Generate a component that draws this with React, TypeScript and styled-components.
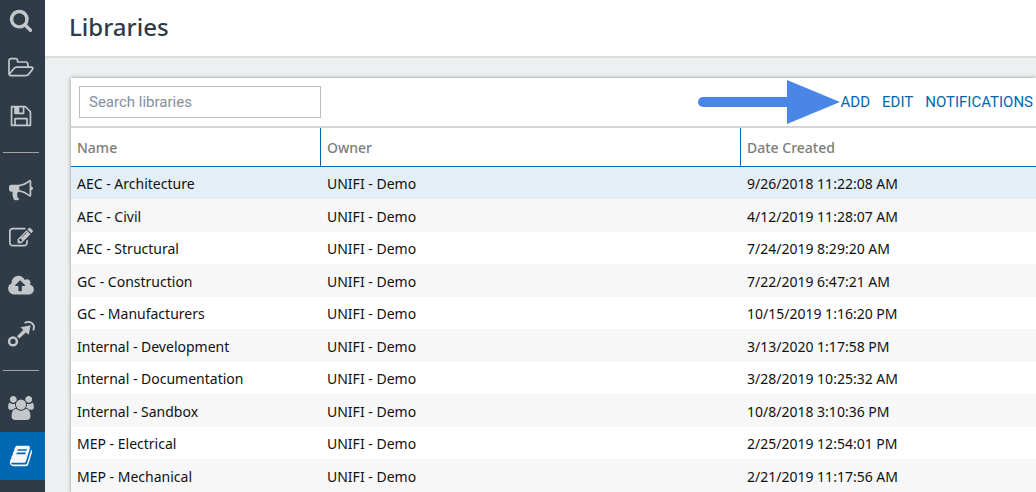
import React from "react";
import styled, { createGlobalStyle, css } from "styled-components";

const GlobalStyle = createGlobalStyle`
  *, *::before, *::after { box-sizing: border-box; }
  body {
    margin: 0;
    background: #ecf0f1;
    font-family: "Noto Sans", "Open Sans", sans-serif;
    overflow: hidden;
  }
`;

const Page = styled.div`
  display: flex;
  height: 100vh;
  overflow: hidden;
`;

const Sidebar = styled.nav`
  flex: 0 0 45px;
  background: #2f3c48;
  overflow: hidden;
`;

const NavList = styled.ul`
  list-style: none;
  margin: -4px 0 0;
  padding: 0;
`;

const NavLink = styled.a<{ $active?: boolean }>`
  display: flex;
  align-items: center;
  justify-content: center;
  height: 48px;
  padding-right: 3px;
  color: #c3c7ca;
  ${(p) =>
    p.$active &&
    css`
      background: #0067b3;
      color: #f4f6f8;
    `}
`;

const Separator = styled.li`
  height: 1px;
  margin: 12px 6px 13px 3px;
  background: #a3a3a1;
`;

const Icon = styled.svg`
  display: block;
  width: 24px;
  height: 24px;
  fill: currentColor;
  overflow: visible;
`;

const Main = styled.main`
  flex: 1;
  min-width: 0;
  display: flex;
  flex-direction: column;
`;

const Header = styled.header`
  flex: none;
  padding: 0 24px 2px;
  background: #ffffff;
  border-bottom: 2px solid #dcdcdc;
`;

const Title = styled.h1`
  margin: 0;
  font-size: 24px;
  line-height: 54px;
  font-weight: 500;
  color: #2f3c48;
`;

const Content = styled.div`
  flex: 1;
  min-height: 0;
  padding: 20px 0 0 26px;
  overflow: hidden;
`;

const Panel = styled.section`
  background: #ffffff;
  box-shadow: 0 0 4px rgba(0, 0, 0, 0.4);
`;

const Toolbar = styled.div`
  display: flex;
  align-items: center;
  height: 50px;
  padding: 0 3px 0 8px;
  border-bottom: 2px solid #d4d4d4;
`;

const SearchInput = styled.input`
  width: 242px;
  height: 32px;
  padding: 0 9px;
  border: 1px solid #b5bcc3;
  border-radius: 0;
  background: #ffffff;
  font-family: Roboto, sans-serif;
  font-size: 15px;
  color: #2f3c48;
  &::placeholder {
    color: #84909c;
    opacity: 1;
  }
`;

const Actions = styled.div`
  display: flex;
  align-items: center;
  gap: 12px;
`;

const ActionButton = styled.button`
  padding: 0;
  border: 0;
  background: none;
  font-family: Roboto, sans-serif;
  font-size: 15px;
  line-height: 20px;
  color: #0067b3;
  cursor: pointer;
`;

const Arrow = styled.svg`
  display: block;
  width: 143px;
  height: 44px;
  margin-left: auto;
  fill: #4a86e8;
`;

const Table = styled.table`
  width: 100%;
  table-layout: fixed;
  border-collapse: separate;
  border-spacing: 0;
  text-align: left;
`;

const Col = styled.col<{ $width?: number }>`
  width: ${(p) => (p.$width ? `${p.$width}px` : "auto")};
`;

const HeadCell = styled.th`
  height: 39px;
  padding: 2px 6px 0;
  border-bottom: 1px solid #0067b3;
  font-size: 14px;
  line-height: 20px;
  font-weight: 500;
  color: #7c7c7c;
  &:not(:last-child) {
    border-right: 1px solid #0067b3;
  }
`;

const Cell = styled.td`
  padding: 2px 6px 0;
  font-size: 14px;
  line-height: 20px;
  color: #111111;
  white-space: nowrap;
`;

const Row = styled.tr<{ $selected?: boolean }>`
  height: 32px;
  background: #f7f7f7;
  &:nth-child(odd) {
    background: #ffffff;
  }
  &:nth-child(even) {
    height: 33px;
  }
  ${(p) =>
    p.$selected &&
    css`
      &&:nth-child(odd) {
        background: #e4eef7;
      }
    `}
`;

type NavItem = { label: string; icon: React.ReactNode; viewBox?: string; active?: boolean };

const navGroups: NavItem[][] = [
  [
    {
      label: "Search",
      icon: (
        <path d="M1216 832q0-185-131.5-316.5t-316.5-131.5-316.5 131.5-131.5 316.5 131.5 316.5 316.5 131.5 316.5-131.5 131.5-316.5zm512 832q0 52-38 90t-90 38q-54 0-90-38l-343-342q-179 124-399 124-143 0-273.5-55.5t-225-150-150-225-55.5-273.5 55.5-273.5 150-225 225-150 273.5-55.5 273.5 55.5 225 150 150 225 55.5 273.5q0 220-124 399l343 343q37 37 37 90z" />
      ),
    },
    {
      label: "Open",
      icon: (
        <path d="M1717 931q0-35-53-35h-1088q-40 0-85.5 21.5t-71.5 52.5l-294 363q-18 24-18 40 0 35 53 35h1088q40 0 86-22t71-53l294-363q18-22 18-39zm-1141-163h768v-160q0-40-28-68t-68-28h-576q-40 0-68-28t-28-68v-64q0-40-28-68t-68-28h-320q-40 0-68 28t-28 68v853l256-315q44-53 116-87.5t140-34.5zm1269 163q0 62-46 120l-295 363q-43 53-116 87.5t-140 34.5h-1088q-92 0-158-66t-66-158v-960q0-92 66-158t158-66h320q92 0 158 66t66 158v32h544q92 0 158 66t66 158v160h192q54 0 99 24.5t67 70.5q15 32 15 68z" />
      ),
    },
    {
      label: "Save",
      icon: (
        <path d="M512 1536h768v-384h-768v384zm896 0h128v-896q0-14-10-38.5t-20-34.5l-281-281q-10-10-34-20t-39-10v416q0 40-28 68t-68 28h-576q-40 0-68-28t-28-68v-416h-128v1280h128v-416q0-40 28-68t68-28h832q40 0 68 28t28 68v416zm-384-928v-320q0-13-9.5-22.5t-22.5-9.5h-192q-13 0-22.5 9.5t-9.5 22.5v320q0 13 9.5 22.5t22.5 9.5h192q13 0 22.5-9.5t9.5-22.5zm640 32v928q0 40-28 68t-68 28h-1344q-40 0-68-28t-28-68v-1344q0-40 28-68t68-28h928q40 0 88 20t76 48l280 280q28 28 48 76t20 88z" />
      ),
    },
  ],
  [
    {
      label: "Announcements",
      icon: (
        <path d="M1664 640q53 0 90.5 37.5t37.5 90.5-37.5 90.5-90.5 37.5v384q0 52-38 90t-90 38q-417-347-812-380-58 19-91 66t-31 100.5 40 92.5q-20 33-23 65.5t6 58 33.5 55 48 50 61.5 50.5q-29 58-111.5 83t-168.5 11.5-132-55.5q-7-23-29.5-87.5t-32-94.5-23-89-15-101 3.5-98.5 22-110.5h-122q-66 0-113-47t-47-113v-192q0-66 47-113t113-47h480q435 0 896-384 52 0 90 38t38 90v384zm-128 604v-954q-394 302-768 343v270q377 42 768 341z" />
      ),
    },
    {
      label: "Edit",
      icon: (
        <path d="M888 1184l116-116-152-152-116 116v56h96v96h56zm440-720q-16-16-33 1l-350 350q-17 17-1 33t33-1l350-350q17-17 1-33zm80 594v190q0 119-84.5 203.5t-203.5 84.5h-832q-119 0-203.5-84.5t-84.5-203.5v-832q0-119 84.5-203.5t203.5-84.5h832q63 0 117 25 15 7 18 23 3 17-9 29l-49 49q-14 14-32 8-23-6-45-6h-832q-66 0-113 47t-47 113v832q0 66 47 113t113 47h832q66 0 113-47t47-113v-126q0-13 9-22l64-64q15-15 35-7t20 29zm-96-738l288 288-672 672h-288v-288zm444 132l-92 92-288-288 92-92q28-28 68-28t68 28l152 152q28 28 28 68t-28 68z" />
      ),
    },
    {
      label: "Upload",
      icon: (
        <path d="M1216 864q0-14-9-23l-352-352q-9-9-23-9t-23 9l-351 351q-10 12-10 24 0 14 9 23t23 9h224v352q0 13 9.5 22.5t22.5 9.5h192q13 0 22.5-9.5t9.5-22.5v-352h224q13 0 22.5-9.5t9.5-22.5zm640 288q0 159-112.5 271.5t-271.5 112.5h-1088q-185 0-316.5-131.5t-131.5-316.5q0-130 70-240t188-165q-2-30-2-43 0-212 150-362t362-150q156 0 285.5 87t188.5 231q71-62 166-62 106 0 181 75t75 181q0 76-41 138 130 31 213.5 135.5t83.5 238.5z" />
      ),
    },
    {
      label: "Connections",
      viewBox: "0 0 24 24",
      icon: (
        <>
          <circle cx="4" cy="19.4" r="3.9" fill="none" stroke="currentColor" strokeWidth="2.5" />
          <path d="M8 14.2 14.2 8 11.6 5.2 21.6 3.2 19.8 12.8 16.8 10.4 10.4 16.6z" />
          <path
            d="M15.6 1.1C20-1.8 27.2 1.4 24.2 8.4"
            fill="none"
            stroke="currentColor"
            strokeWidth="1.8"
          />
        </>
      ),
    },
  ],
  [
    {
      label: "Users",
      icon: (
        <path d="M529 896q-162 5-265 128h-134q-82 0-138-40.5t-56-118.5q0-353 124-353 6 0 43.5 21t97.5 42.5 119 21.5q67 0 133-23-5 37-5 66 0 139 81 256zm1071 637q0 120-73 189.5t-194 69.5h-874q-121 0-194-69.5t-73-189.5q0-53 3.5-103.5t14-109 26.5-108.5 43-97.5 62-81 85.5-53.5 111.5-20q10 0 43 21.5t73 48 107 48 135 21.5 135-21.5 107-48 73-48 43-21.5q61 0 111.5 20t85.5 53.5 62 81 43 97.5 26.5 108.5 14 109 3.5 103.5zm-1024-1277q0 106-75 181t-181 75-181-75-75-181 75-181 181-75 181 75 75 181zm704 384q0 159-112.5 271.5t-271.5 112.5-271.5-112.5-112.5-271.5 112.5-271.5 271.5-112.5 271.5 112.5 112.5 271.5zm576 225q0 78-56 118.5t-138 40.5h-134q-103-123-265-128 81-117 81-256 0-29-5-66 66 23 133 23 59 0 119-21.5t97.5-42.5 43.5-21q124 0 124 353zm-128-609q0 106-75 181t-181 75-181-75-75-181 75-181 181-75 181 75 75 181z" />
      ),
    },
    {
      label: "Libraries",
      active: true,
      icon: (
        <path d="M1703 478q40 57 18 129l-275 906q-19 64-76.5 107.5t-122.5 43.5h-923q-77 0-148.5-53.5t-99.5-131.5q-24-67-2-127 0-4 3-27t4-37q1-8-3-21.5t-3-19.5q2-11 8-21t16.5-23.5 16.5-23.5q23-38 45-91.5t30-91.5q3-10 .5-30t-.5-28q3-11 17-28t17-23q21-36 42-92t25-90q1-9-2.5-32t.5-28q4-13 22-30.5t22-22.5q19-26 42.5-84.5t27.5-96.5q1-8-3-25.5t-2-26.5q2-8 9-18t18-23 17-21q8-12 16.5-30.5t15-35 16-36 19.5-32 26.5-23.5 36-11.5 47.5 5.5l-1 3q38-9 51-9h761q74 0 114 56t18 130l-274 906q-36 119-71.5 153.5t-128.5 34.5h-869q-27 0-38 15-11 16-1 43 24 70 144 70h923q29 0 56-15.5t35-41.5l300-987q7-22 5-57 38 15 59 43zm-1064 2q-4 13 2 22.5t20 9.5h608q13 0 25.5-9.5t16.5-22.5l21-64q4-13-2-22.5t-20-9.5h-608q-13 0-25.5 9.5t-16.5 22.5zm-83 256q-4 13 2 22.5t20 9.5h608q13 0 25.5-9.5t16.5-22.5l21-64q4-13-2-22.5t-20-9.5h-608q-13 0-25.5 9.5t-16.5 22.5z" />
      ),
    },
  ],
];

const libraries = [
  ["AEC - Architecture", "9/26/2018 11:22:08 AM"],
  ["AEC - Civil", "4/12/2019 11:28:07 AM"],
  ["AEC - Structural", "7/24/2019 8:29:20 AM"],
  ["GC - Construction", "7/22/2019 6:47:21 AM"],
  ["GC - Manufacturers", "10/15/2019 1:16:20 PM"],
  ["Internal - Development", "3/13/2020 1:17:58 PM"],
  ["Internal - Documentation", "3/28/2019 10:25:32 AM"],
  ["Internal - Sandbox", "10/8/2018 3:10:36 PM"],
  ["MEP - Electrical", "2/25/2019 12:54:01 PM"],
  ["MEP - Mechanical", "2/21/2019 11:17:56 AM"],
];

export default function App() {
  return (
    <>
      <GlobalStyle />
      <Page>
        <Sidebar aria-label="Main">
          <NavList>
            {navGroups.map((group, g) => (
              <React.Fragment key={g}>
                {g > 0 && <Separator role="separator" />}
                {group.map((item) => (
                  <li key={item.label}>
                    <NavLink
                      href="#"
                      aria-label={item.label}
                      aria-current={item.active ? "page" : undefined}
                      $active={item.active}
                    >
                      <Icon viewBox={item.viewBox ?? "0 0 1792 1792"} aria-hidden="true">
                        {item.icon}
                      </Icon>
                    </NavLink>
                  </li>
                ))}
              </React.Fragment>
            ))}
          </NavList>
        </Sidebar>
        <Main>
          <Header>
            <Title>Libraries</Title>
          </Header>
          <Content>
            <Panel>
              <Toolbar>
                <SearchInput type="text" placeholder="Search libraries" aria-label="Search libraries" />
                <Arrow viewBox="0 0 143 44" aria-hidden="true">
                  <rect x="0" y="17" width="100" height="10" rx="5" />
                  <path d="M89 0 142 22 89 44z" />
                </Arrow>
                <Actions>
                  <ActionButton type="button">ADD</ActionButton>
                  <ActionButton type="button">EDIT</ActionButton>
                  <ActionButton type="button">NOTIFICATIONS</ActionButton>
                </Actions>
              </Toolbar>
              <Table>
                <colgroup>
                  <Col $width={250} />
                  <Col $width={420} />
                  <Col />
                </colgroup>
                <thead>
                  <tr>
                    <HeadCell scope="col">Name</HeadCell>
                    <HeadCell scope="col">Owner</HeadCell>
                    <HeadCell scope="col">Date Created</HeadCell>
                  </tr>
                </thead>
                <tbody>
                  {libraries.map(([name, created], i) => (
                    <Row key={name} $selected={i === 0}>
                      <Cell>{name}</Cell>
                      <Cell>UNIFI - Demo</Cell>
                      <Cell>{created}</Cell>
                    </Row>
                  ))}
                </tbody>
              </Table>
            </Panel>
          </Content>
        </Main>
      </Page>
    </>
  );
}
